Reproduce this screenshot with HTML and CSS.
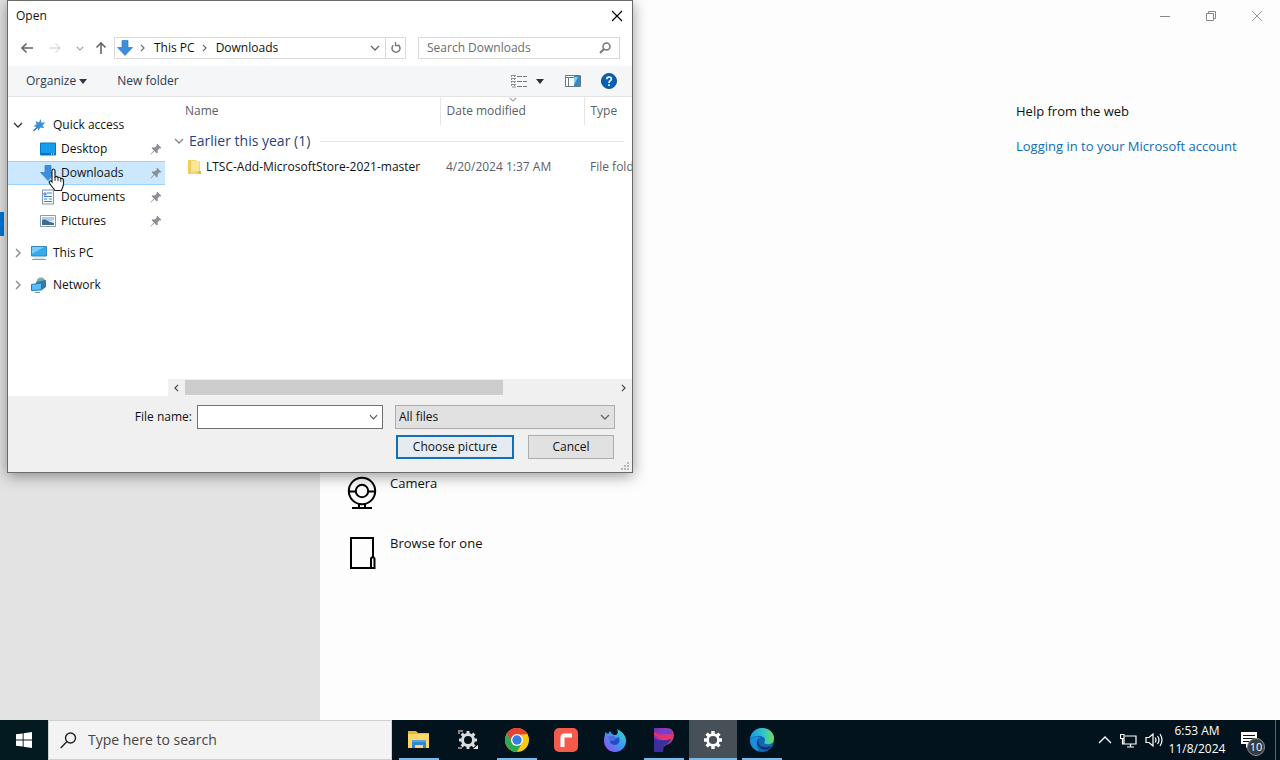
FILE: index.html
```html
<!DOCTYPE html>
<html lang="en">
<head>
<meta charset="utf-8">
<title>Open</title>
<link rel="stylesheet" href="styles.css">
</head>
<body>
<svg class="defs" aria-hidden="true">
  <symbol id="pin" viewBox="0 0 12 12"><path d="M7 0.500 11.500 5 10.200 5.600 9.600 5.200 7.600 7.400 7.800 9.600 6.800 10.400 4.400 8 1 11.400 0.500 11 3.900 7.500 1.600 5.200 2.500 4.200 4.700 4.500 6.900 2.400 6.400 1.700Z" fill="#8b9096"/></symbol>
  <symbol id="down" viewBox="0 0 10 6"><path d="M1 1l4 4 4-4" fill="none" stroke="currentColor" stroke-width="1.300"/></symbol>
  <symbol id="right" viewBox="0 0 6 10"><path d="M1 1l4 4-4 4" fill="none" stroke="currentColor" stroke-width="1.400"/></symbol>
  <symbol id="arrow" viewBox="0 0 16 16"><path d="M5 .5h6v7h4.500L8 15.500.5 7.500H5z" fill="#3b8ede" stroke="#2f7cc4" stroke-width=".7"/></symbol>
  <symbol id="gear" viewBox="0 0 20 20"><g fill="none" stroke="currentColor"><circle cx="10" cy="10" r="5.400" stroke-width="2.600"/><path stroke-width="3.400" d="M10 4.500V1M10 19v-3.500M4.500 10H1M19 10h-3.500M6 6 3.600 3.600M16.400 16.400 14 14M6 14l-2.400 2.400M16.400 3.600 14 6"/></g></symbol>
</svg>

<main class="desktop">
  <section class="settings">
    <nav class="settings-nav" aria-label="Settings"><span class="nav-mark"></span></nav>
    <div class="settings-page">
      <div class="options">
        <button class="option">
          <svg width="32" height="34" viewBox="0 0 32 34" fill="none" stroke="#000" stroke-width="2"><circle cx="16" cy="15" r="13.200"/><circle cx="16" cy="15" r="6.200"/><path d="M2.500 15.500H10M22 15.500h7.500M13 28v4M19 28v4M6 32h20"/></svg>
          <span>Camera</span>
        </button>
        <button class="option">
          <svg width="32" height="34" viewBox="0 0 32 34" fill="none" stroke="#000" stroke-width="2"><path d="M27 20V2H5v30h23.500V22.500L27 20.500l-2 2V32"/></svg>
          <span>Browse for one</span>
        </button>
      </div>
      <aside class="help">
        <div class="window-controls">
          <button aria-label="Minimize"><svg width="12" height="12"><path d="M1 6.500h10" stroke="#888"/></svg></button>
          <button aria-label="Restore"><svg width="12" height="12" fill="none" stroke="#888"><path d="M1.500 3.500h7v7h-7zM3.500 3V1.500h7v7H9"/></svg></button>
          <button aria-label="Close"><svg width="12" height="12" stroke="#999"><path d="M1 1l10 10M11 1 1 11"/></svg></button>
        </div>
        <h2>Help from the web</h2>
        <a href="#">Logging in to your Microsoft account</a>
      </aside>
    </div>
  </section>

  <section class="dialog" role="dialog" aria-labelledby="dialog-title">
    <header class="titlebar">
      <h1 id="dialog-title">Open</h1>
      <button aria-label="Close"><svg width="12" height="12" stroke="#000" stroke-width="1.200"><path d="M1 1l10 10M11 1 1 11"/></svg></button>
    </header>
    <div class="navbar">
      <div class="history">
        <button aria-label="Back"><svg width="14" height="12" fill="none" stroke="#666" stroke-width="1.600"><path d="M13 6H2M6.500 1.500 2 6l4.500 4.500"/></svg></button>
        <button aria-label="Forward"><svg width="14" height="12" fill="none" stroke="#ddd" stroke-width="1.400"><path d="M1 6h11M7.500 1.500 12 6l-4.500 4.500"/></svg></button>
        <button class="recent" aria-label="Recent locations"><svg width="8" height="5"><use href="#down"/></svg></button>
        <button class="up" aria-label="Up"><svg width="12" height="14" fill="none" stroke="#666" stroke-width="1.600"><path d="M6 13V2M1.500 6.500 6 2l4.500 4.500"/></svg></button>
      </div>
      <div class="address">
        <svg width="16" height="16"><use href="#arrow"/></svg>
        <svg class="crumb-mark" width="5" height="8"><use href="#right"/></svg>
        <button>This PC</button>
        <svg class="crumb-mark" width="5" height="8"><use href="#right"/></svg>
        <button>Downloads</button>
        <button class="address-drop" aria-label="Previous locations"><svg width="10" height="6"><use href="#down"/></svg></button>
        <button class="refresh" aria-label="Refresh"><svg width="12" height="12" fill="none" stroke="#777" stroke-width="1.500"><path d="M8.600 3.300A4 4 0 1 1 3.400 3.300"/><path d="M5.500 0v3.500H9.500" stroke-width="1.300"/></svg></button>
      </div>
      <label class="search">
        <input type="text" placeholder="Search Downloads" aria-label="Search Downloads">
        <svg width="12" height="12" fill="none" stroke="#777" stroke-width="1.500"><circle cx="7.500" cy="4.500" r="3.500"/><path d="M5 7 1 11" stroke-width="2"/></svg>
      </label>
    </div>
    <div class="toolbar">
      <button>Organize <svg width="8" height="5"><path d="M0 0h8L4 5z" fill="#303848"/></svg></button>
      <button>New folder</button>
      <div class="toolbar-right">
        <button aria-label="Change view"><svg width="17" height="14" fill="none" stroke="#8a9099"><path d="M.5 1v12M3.500 1v12" stroke-dasharray="2 1"/><path d="M1 1.500h4M1 4.500h4M1 7.500h4M1 10.500h4M1 13h4"/><path d="M6 2.500h5M12 2.500h4M6 7.500h5M12 7.500h4M6 12.500h5M12 12.500h4" stroke="#777"/></svg></button>
        <button aria-label="More views"><svg width="8" height="5"><path d="M0 0h8L4 5z" fill="#303030"/></svg></button>
        <button aria-label="Show the preview pane"><svg width="16" height="12"><path d="M.5.500h15v11H.5zM.5 2.500h15M3.500 3v8" fill="#fff" stroke="#68788a"/><path d="M9 1h6v10H9z" fill="#3388c8"/><path d="M9 2h4l-4 8z" fill="#8ccaf0"/></svg></button>
        <button aria-label="Get help"><svg width="16" height="16"><circle cx="8" cy="8" r="7.600" fill="#0661b8" stroke="#0a4383" stroke-width=".8"/><path d="M5.700 6.300Q5.700 4 8.100 4t2.300 2.200C10.400 7.700 8 7.800 8 9.900M8 11.200v1.700" fill="none" stroke="#fff" stroke-width="1.600"/></svg></button>
      </div>
    </div>

    <div class="browser">
      <nav class="tree" aria-label="Folders">
        <a href="#" class="root"><svg class="toggle open" width="10" height="6"><use href="#down"/></svg><svg width="16" height="16"><path d="m9.500 2 1 3.700 4-.4-3 2.900 1.700 3-3.700-.6-2.400 3.200-.8-3.700-4-.8 3.300-2-1-3.200 3.400 1.300z" fill="#3b91d8"/><path d="M7 9.500 2.500 14" stroke="#2d75bd" stroke-width="1.500"/></svg>Quick access</a>
        <a href="#" class="leaf"><svg width="16" height="16"><path d="M.5 2h15v12H.5z" fill="#159ded" stroke="#0878c0"/><path d="M1 12h14v2H1z" fill="#0870c0"/><path d="M11 13h1M13 13h1" stroke="#fff"/></svg><span>Desktop</span><svg width="12" height="12"><use href="#pin"/></svg></a>
        <a href="#" class="leaf selected" aria-current="true"><svg width="16" height="16"><use href="#arrow"/></svg><span>Downloads</span><svg width="12" height="12"><use href="#pin"/></svg></a>
        <a href="#" class="leaf"><svg width="16" height="16"><path d="M2.500 1h11v14h-11z" fill="#f8fbff" stroke="#7d96ad"/><path d="M4 4h2v2H4zM4 7.500h8M4 10h3M9 10h3M4 12.500h8M7 4h5" fill="none" stroke="#3e83c0"/></svg><span>Documents</span><svg width="12" height="12"><use href="#pin"/></svg></a>
        <a href="#" class="leaf"><svg width="16" height="16"><path d="M.5 2.500h15v11H.5z" fill="#fff" stroke="#889aad"/><path d="M2 4h12v8H2z" fill="#a6d0ec"/><path d="M2 7q3-1.500 6 1l6 1v3H2z" fill="#416a8b"/><path d="M8 8.500 14 7v3z" fill="#e3eef5"/></svg><span>Pictures</span><svg width="12" height="12"><use href="#pin"/></svg></a>
        <a href="#" class="root spaced"><svg class="toggle" width="6" height="10"><use href="#right"/></svg><svg width="16" height="16"><path d="M.5 1.500h15v9.500H.5z" fill="#35aaf0" stroke="#3486bd"/><path d="M1 2h12L1 9z" fill="#7bcdf8"/><path d="M1 14.500h14" stroke="#8b99a5"/><path d="M3 13h10" stroke="#ccd4da"/></svg>This PC</a>
        <a href="#" class="root spaced"><svg class="toggle" width="6" height="10"><use href="#right"/></svg><svg width="16" height="16"><circle cx="10" cy="5" r="4.500" fill="#72b0a9"/><path d="m5 5 10-2v7l-4 3H5z" fill="#3579aa"/><path d="M.5 7.500 10.500 6v7l-10 .5z" fill="#57bdf5" stroke="#277bb5"/><path d="M4 15.500h5" stroke="#7593aa"/></svg>Network</a>
      </nav>
      <div class="files">
        <div class="table-clip">
          <table>
            <colgroup><col class="col-name"><col class="col-date"><col class="col-type"></colgroup>
            <thead><tr><th>Name</th><th class="sorted"><svg width="8" height="5"><use href="#down"/></svg>Date modified</th><th>Type</th></tr></thead>
            <tbody>
              <tr class="group"><td colspan="3"><div><svg width="10" height="6"><use href="#down"/></svg>Earlier this year (1)<i></i></div></td></tr>
              <tr class="file"><td><div><svg width="14" height="16"><path d="M1 1h8l1 1.500h3V15H1z" fill="#f6d66e"/><path d="M3 2h9v10H3z" fill="#fbe795"/><path d="M1 1h3v14H1z" fill="#f2cc56"/><path d="M11 12h3v3h-3z" fill="#e9b93d"/></svg>LTSC-Add-MicrosoftStore-2021-master</div></td><td>4/20/2024 1:37 AM</td><td>File folder</td></tr>
            </tbody>
          </table>
        </div>
        <div class="scrollbar">
          <button aria-label="Scroll left"><svg class="flip" width="5" height="8"><use href="#right"/></svg></button>
          <div class="track"><div class="thumb"></div></div>
          <button aria-label="Scroll right"><svg width="5" height="8"><use href="#right"/></svg></button>
        </div>
      </div>
    </div>

    <form class="dialog-footer">
      <label for="file-name">File name:</label>
      <div class="combo">
        <input id="file-name" type="text">
        <button type="button" aria-label="Show file names"><svg width="9" height="6"><use href="#down"/></svg></button>
      </div>
      <div class="confirm">
        <div class="filter">
          <select aria-label="File type"><option>All files</option></select>
          <svg width="10" height="6"><use href="#down"/></svg>
        </div>
        <button type="button" class="primary">Choose picture</button>
        <button type="button">Cancel</button>
      </div>
    </form>
    <svg class="grip" width="9" height="9" fill="#b8b8b8"><path d="M6 0h2v2H6zM3 3h2v2H3zM6 3h2v2H6zM0 6h2v2H0zM3 6h2v2H3zM6 6h2v2H6z"/></svg>
  </section>

  <svg class="pointer" width="18" height="24" viewBox="0 0 18 24"><path d="M4 14V3q0-2 1.500-2T7 3v6q1.700-1.200 3 .5 1.800-.8 2.700 1 2.300-.3 2.800 1.500V17l-2 5.500H7L2 16q-1.500-2.500 0-3 1-.3 2 1z" fill="#fff" stroke="#222" stroke-width="1.200"/><path d="M7 9v4M10 10v3M12.800 11v3" stroke="#222"/></svg>
</main>

<footer class="taskbar">
  <button class="start" aria-label="Start"><svg width="16" height="16" fill="#fff"><path d="M0 2.300 6.700 1.400v6.200H0zM7.600 1.300 16 0v7.600H7.600zM0 8.400h6.700v6.200L0 13.700zM7.600 8.400H16V16l-8.400-1.300z"/></svg></button>
  <label class="task-search">
    <svg width="17" height="17" fill="none" stroke="#222" stroke-width="1.400"><circle cx="10.500" cy="6" r="5"/><path d="M7 9.500.7 16"/></svg>
    <input type="text" placeholder="Type here to search" aria-label="Type here to search">
  </label>
  <div class="apps">
    <button class="running" aria-label="File Explorer"><svg width="24" height="24"><path d="M1 3h8l2 2h11v15H1z" fill="#efb52e"/><path d="M1 6h21v14H1z" fill="#fbd766"/><path d="M5 12h14v8h-3v-3H8v3H5z" fill="#3485cf"/><path d="M5 12h14v2H5z" fill="#53a5e4"/></svg></button>
    <button aria-label="System tool"><svg width="22" height="22" color="#dcdcdc"><circle cx="11" cy="11" r="5.500" fill="none" stroke="currentColor" stroke-width="3"/><path d="M11 6V2M11 20v-4M6 11H2M20 11h-4M7.500 7.500 4.600 4.600M17.400 4.600l-2.900 2.900M7.500 14.500l-2.900 2.900M14.500 14.500l3 3" stroke="currentColor" stroke-width="3"/><path d="M1 2h5M1 4h2M1 19h4" stroke="#aaa" stroke-width="1.500"/><path d="M21 16v4h-5z" fill="#eee"/></svg></button>
    <button class="running" aria-label="Chrome"><svg width="24" height="24"><circle cx="12" cy="12" r="12" fill="#fbc916"/><path d="M1.600 6A12 12 0 0 1 22.400 6L12 7 8 15z" fill="#e94235"/><path d="M1.600 6A12 12 0 0 0 12 24l5-9-9-1z" fill="#31a653"/><circle cx="12" cy="12" r="6" fill="#fff"/><circle cx="12" cy="12" r="4.700" fill="#347de8"/></svg></button>
    <button aria-label="Recorder"><svg width="24" height="24"><rect width="24" height="24" rx="5" fill="#f45b4b"/><path d="M8.500 19V9.500q0-2 2-2H18" fill="none" stroke="#fff" stroke-width="4"/></svg></button>
    <button aria-label="Firefox"><svg width="24" height="24"><defs><linearGradient id="fox" x1="1" y1="0" x2="0" y2="1"><stop stop-color="#35e3c1"/><stop offset=".45" stop-color="#369cf1"/><stop offset="1" stop-color="#a340f1"/></linearGradient></defs><path d="M14 1c6 3 9 7 9 12a11 11 0 0 1-22 0C1 9 2 7 2.500 4L5 6l2-3 2 3q1 1 4 1 3-2 1-6z" fill="url(#fox)"/><path d="M7 10q2-3 4-1 2 2 5 0 2 8-5 8-5-1-4-7z" fill="#244fc0"/><path d="M5 9q3-2 5 0l3 1q-1 3-4 3-3 0-4-4z" fill="#5b65e7"/></svg></button>
    <button class="running" aria-label="Media app"><svg width="24" height="24"><defs><linearGradient id="media" x1="0" y1="0" x2="1" y2="1"><stop stop-color="#553abe"/><stop offset=".35" stop-color="#b532a9"/><stop offset=".55" stop-color="#f43e71"/><stop offset="1" stop-color="#4637bd"/></linearGradient></defs><path d="M2 0h12c12 0 9 16 0 17l-3 2v5H2z" fill="url(#media)"/><path d="M5 1h9q6 0 7 5-8 2-16-5z" fill="#6d42cf"/><path d="M2 4q9 6 19 2l-1 4Q10 12 2 7z" fill="#ef315f"/><path d="M2 10q7 4 17 1-3 6-7 6l-1 7H2z" fill="#3a2f9b"/></svg></button>
    <button class="running active" aria-label="Settings"><svg width="20" height="20" color="#fff"><use href="#gear"/></svg></button>
    <button class="running" aria-label="Edge"><svg width="24" height="24"><defs><linearGradient id="edge"><stop stop-color="#159bdf"/><stop offset=".6" stop-color="#34c6c5"/><stop offset="1" stop-color="#72dd57"/></linearGradient></defs><circle cx="12" cy="12" r="12" fill="#1266b6"/><path d="M0 11C1 4 6 0 12 0c8 0 12 6 12 10 0 5-3 7-8 6-3-.5-1-2-1-4q0-3-4-4-7-1-11 3z" fill="url(#edge)"/><path d="M9 10c-3 6 3 12 12 8l-2 3c-5 2-12-1-12-7q0-3 2-4z" fill="#102e69"/><path d="M0 12q4-5 10-3-6 5-1 14Q0 21 0 12z" fill="#198ed9"/></svg></button>
  </div>
  <div class="tray">
    <button aria-label="Show hidden icons"><svg width="14" height="8" fill="none" stroke="#fff" stroke-width="1.400"><path d="m1 7 6-6 6 6"/></svg></button>
    <button aria-label="Network"><svg width="17" height="15" fill="none" stroke="#fff" stroke-width="1.200"><path d="M5 3h11v8H4V6M7 14h7M10.500 11v3M.5 1.500H4v4H.5zM2.500 6v5H4"/></svg></button>
    <button aria-label="Volume"><svg width="18" height="14" fill="none" stroke="#fff" stroke-width="1.200"><path d="M1 4.500h3L8 1v12L4 9.500H1zM10 4.500q2 2.500 0 5M12.500 3q3 4 0 8M15 1q4 6 0 12"/></svg></button>
    <button class="clock"><time>6:53 AM</time><time>11/8/2024</time></button>
    <button class="notifications" aria-label="10 notifications"><svg width="16" height="16"><path d="M0 0h16v12H9l-4 4v-4H0z" fill="#fff"/><path d="M2 3.500h12M2 6.500h12M2 9.500h9" stroke="#07141d"/></svg><span>10</span></button>
    <span class="peek"></span>
  </div>
</footer>
</body>
</html>
```

FILE: styles.css
```css
* { box-sizing: border-box; }
body {
  margin: 0;
  min-height: 100vh;
  display: flex;
  flex-direction: column;
  font: 12px/16px "Open Sans", "Noto Sans", sans-serif;
  color: #111;
  background: #fdfdfd;
}
button, input, select { font: inherit; color: inherit; }
button { border: 0; padding: 0; background: none; display: flex; align-items: center; justify-content: center; }
input { border: 0; outline: 0; background: none; min-width: 0; padding: 0; }
h1, h2 { margin: 0; font: inherit; }
a { color: inherit; text-decoration: none; }
svg { display: block; flex: none; }
.defs { position: absolute; width: 0; height: 0; }

.desktop { position: relative; flex: 1; display: flex; }
.settings { flex: 1; display: flex; font-size: 13px; line-height: 20px; }
.settings-nav { flex: 0 0 25%; background: #e3e3e3; padding-top: 212px; }
.nav-mark { display: block; width: 4px; height: 24px; background: #0078d7; }
.settings-page { flex: 1; display: flex; justify-content: space-between; }
.options { display: flex; flex-direction: column; gap: 24px; padding: 473px 0 40px 26px; }
.option { height: 36px; gap: 12px; align-items: flex-start; justify-content: flex-start; }
.option svg { margin-top: 3px; }
.help { width: 264px; display: flex; flex-direction: column; align-items: flex-start; }
.help h2 { margin: 69px 0 15px; }
.help > a { color: #0e6fb0; }
.window-controls { align-self: flex-end; display: flex; }
.window-controls button { width: 46px; height: 32px; }

.dialog {
  position: absolute;
  left: 7px;
  top: 0;
  width: 626px;
  display: flex;
  flex-direction: column;
  background: #fff;
  border: 1px solid #6a6a6a;
  box-shadow: 0 3px 14px #0006;
}
.titlebar { display: flex; justify-content: space-between; height: 29px; padding-left: 8px; align-items: center; }
.titlebar button { width: 31px; height: 29px; }
.navbar { display: flex; height: 36px; align-items: center; padding: 0 12px; }
.history { width: 94px; display: flex; gap: 14px; align-items: center; }
.history .recent { width: 8px; color: #999; }
.history .up { margin-left: -3px; }
.address { flex: 1; height: 22px; display: flex; align-items: center; border: 1px solid #d9d9d9; padding-left: 2px; margin-right: 12px; }
.crumb-mark { margin: 0 9px 0 7px; color: #666; }
.address-drop { margin-left: auto; width: 20px; color: #666; }
.refresh { width: 20px; align-self: stretch; border-left: 1px solid #d9d9d9; }
.search { width: 202px; height: 22px; display: flex; align-items: center; border: 1px solid #d9d9d9; padding: 0 8px; }
.search input { flex: 1; }
.search input::placeholder { color: #6d6d6d; opacity: 1; }
.toolbar { display: flex; height: 31px; align-items: center; gap: 30px; padding: 0 15px 0 18px; background: #f5f6f7; border-bottom: 1px solid #e4e4e4; color: #2c3950; }
.toolbar button { gap: 3px; }
.toolbar-right { margin-left: auto; display: flex; align-items: center; gap: 20px; }
.toolbar-right button:nth-child(2) { margin: 0 1px 0 -12px; }

.browser { display: flex; height: 299px; }
.tree { width: 157px; padding-top: 16px; }
.tree a { display: flex; align-items: center; height: 24px; }
.tree .root { padding-left: 3px; gap: 6px; }
.tree .spaced { margin-top: 8px; }
.toggle { width: 14px; color: #888; }
.toggle.open { color: #333; }
.tree .leaf { padding: 0 3px 0 32px; gap: 5px; }
.leaf span { flex: 1; }
.tree .selected { background: #cce8ff; border: solid #99d1ff; border-width: 1px 0; }
.files { flex: 1; min-width: 0; display: flex; flex-direction: column; justify-content: space-between; }
.table-clip { overflow: hidden; }
table { width: 540px; table-layout: fixed; border-collapse: collapse; color: #5c6068; }
.col-name { width: 275px; }
.col-date { width: 144px; }
th, td { padding: 0 0 0 6px; text-align: left; font-weight: 400; white-space: nowrap; }
th { height: 28px; border-right: 1px solid #e5e5e5; }
th:first-child { padding-left: 20px; }
.sorted { position: relative; }
.sorted svg { position: absolute; top: 0; left: 68px; color: #999; }
.group div { display: flex; align-items: center; height: 32px; gap: 5px; padding-left: 3px; width: 453px; font-size: 14px; color: #2b3f7c; }
.group svg { color: #888; }
.group i { flex: 1; height: 1px; background: #e8e8e8; margin-left: 5px; }
.file td { height: 20px; }
.file div { display: flex; align-items: center; gap: 5px; padding-left: 16px; color: #111; }
.scrollbar { display: flex; height: 17px; margin-left: 3px; background: #f0f0f0; color: #444; }
.scrollbar button { width: 17px; }
.flip { transform: scaleX(-1); }
.track { flex: 1; padding: 1px 0; }
.thumb { width: 74%; height: 15px; background: #cdcdcd; }

.dialog-footer { display: flex; align-items: flex-start; justify-content: flex-end; padding: 9px 17px 13px 0; background: #f0f0f0; }
.dialog-footer > label { padding: 4px 5px 0 0; }
.combo { display: flex; width: 186px; height: 24px; border: 1px solid #707070; background: #fff; margin-right: 12px; color: #555; }
.combo input { flex: 1; padding-left: 4px; }
.combo button { width: 18px; }
.confirm { display: grid; grid-template-columns: 120px 88px; justify-content: space-between; row-gap: 6px; width: 220px; }
.filter { grid-column: 1 / 3; display: flex; align-items: center; color: #666; height: 24px; border: 1px solid #adadad; background: #e1e1e1; padding-right: 4px; }
.filter select { flex: 1; appearance: none; border: 0; outline: 0; background: none; color: #111; padding: 0 3px; }
.confirm button { height: 24px; margin: 0 1px; border: 1px solid #adadad; background: #e1e1e1; }
.confirm .primary { border: 2px solid #0f70b8; background: #e5ebf0; }
.grip { position: absolute; right: 2px; bottom: 1px; }
.pointer { position: absolute; left: 48px; top: 168px; }

.taskbar { display: flex; height: 40px; background: #03131d; color: #fff; }
.start { width: 48px; background: #021a20; }
.task-search { flex: 0 1 344px; display: flex; align-items: center; gap: 11px; padding: 0 11px; background: #f3f3f3; border: 1px solid #d0d0d0; font-size: 14px; line-height: 20px; }
.task-search input { flex: 1; color: #222; }
.task-search input::placeholder { color: #444; opacity: 1; }
.apps { display: flex; gap: 1px; padding-left: 3px; }
.apps button { width: 48px; border: solid transparent; border-width: 2px 0; }
.apps .running { border-bottom-color: #76b9ed; width: 40px; margin: 0 4px; }
.apps .active { width: 48px; margin: 0; background: #475056; }
.tray { margin-left: auto; display: flex; align-items: center; gap: 8px; }
.clock { flex-direction: column; margin: 0 6px 0 -4px; line-height: 18px; width: 60px; }
.notifications { position: relative; width: 26px; height: 40px; justify-content: flex-start; }
.notifications span { position: absolute; left: 6px; top: 18px; width: 18px; height: 18px; border: 1px solid #889096; border-radius: 50%; background: #343d44; font-size: 11px; line-height: 16px; }
.peek { align-self: stretch; width: 5px; border-left: 1px solid #56616a; }
```
